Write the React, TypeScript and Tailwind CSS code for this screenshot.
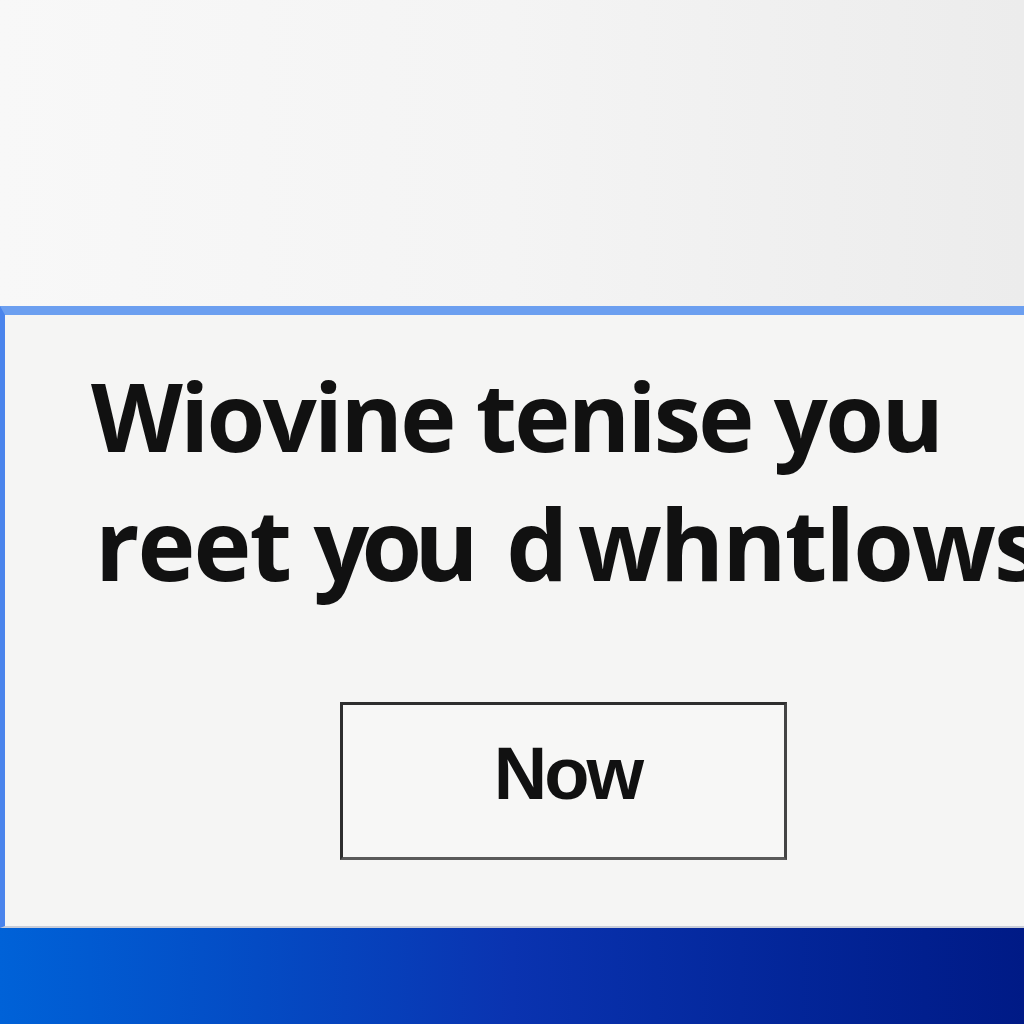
import React from "react";

export default function App() {
  return (
    <div className="w-[1024px] h-[1024px] flex flex-col overflow-hidden" style={{ fontFamily: '"Liberation Sans", Arial, sans-serif' }}>
      <div className="h-[306px] shrink-0 bg-gradient-to-r from-[#f8f8f8] via-[#f4f4f4] to-[#ececec]" />
      <div className="h-[622px] shrink-0 border-t-[9px] border-t-[#6c9ff0] border-l-[5px] border-l-[#4a84ec] border-b-[2px] border-b-[#c8ccd8] bg-[#f5f5f4] overflow-hidden flex flex-col">
        <div className="pl-[86px] pt-[35px] text-[#111111] font-bold whitespace-nowrap" style={{ fontFamily: '"Open Sans", sans-serif' }}>
          <div className="text-[95px] leading-[130px] tracking-[-0.028em]">Wiovine tenise you</div>
          <div className="text-[98px] leading-[126px] tracking-[-0.02em]">
            <span className="ml-[4px]">reet</span> <span className="tracking-[-0.08em]">you</span> <span className="ml-[12px]">d</span> <span className="-ml-[12px]">whntlows</span>
          </div>
        </div>
        <div className="ml-[335px] mt-[96px] w-[447px] h-[158px] border-[3px] border-[#2e2e2e] border-b-[#5a5a5a] border-r-[#444444] bg-[#f7f7f6] flex items-center justify-center">
          <span className="text-[74px] leading-none font-bold tracking-[-0.04em] text-[#111111] -mt-[14px] ml-[8px]">Now</span>
        </div>
      </div>
      <div className="flex-1 bg-gradient-to-r from-[#0062d8] via-[#0a33b0] to-[#001a86]" />
    </div>
  );
}
